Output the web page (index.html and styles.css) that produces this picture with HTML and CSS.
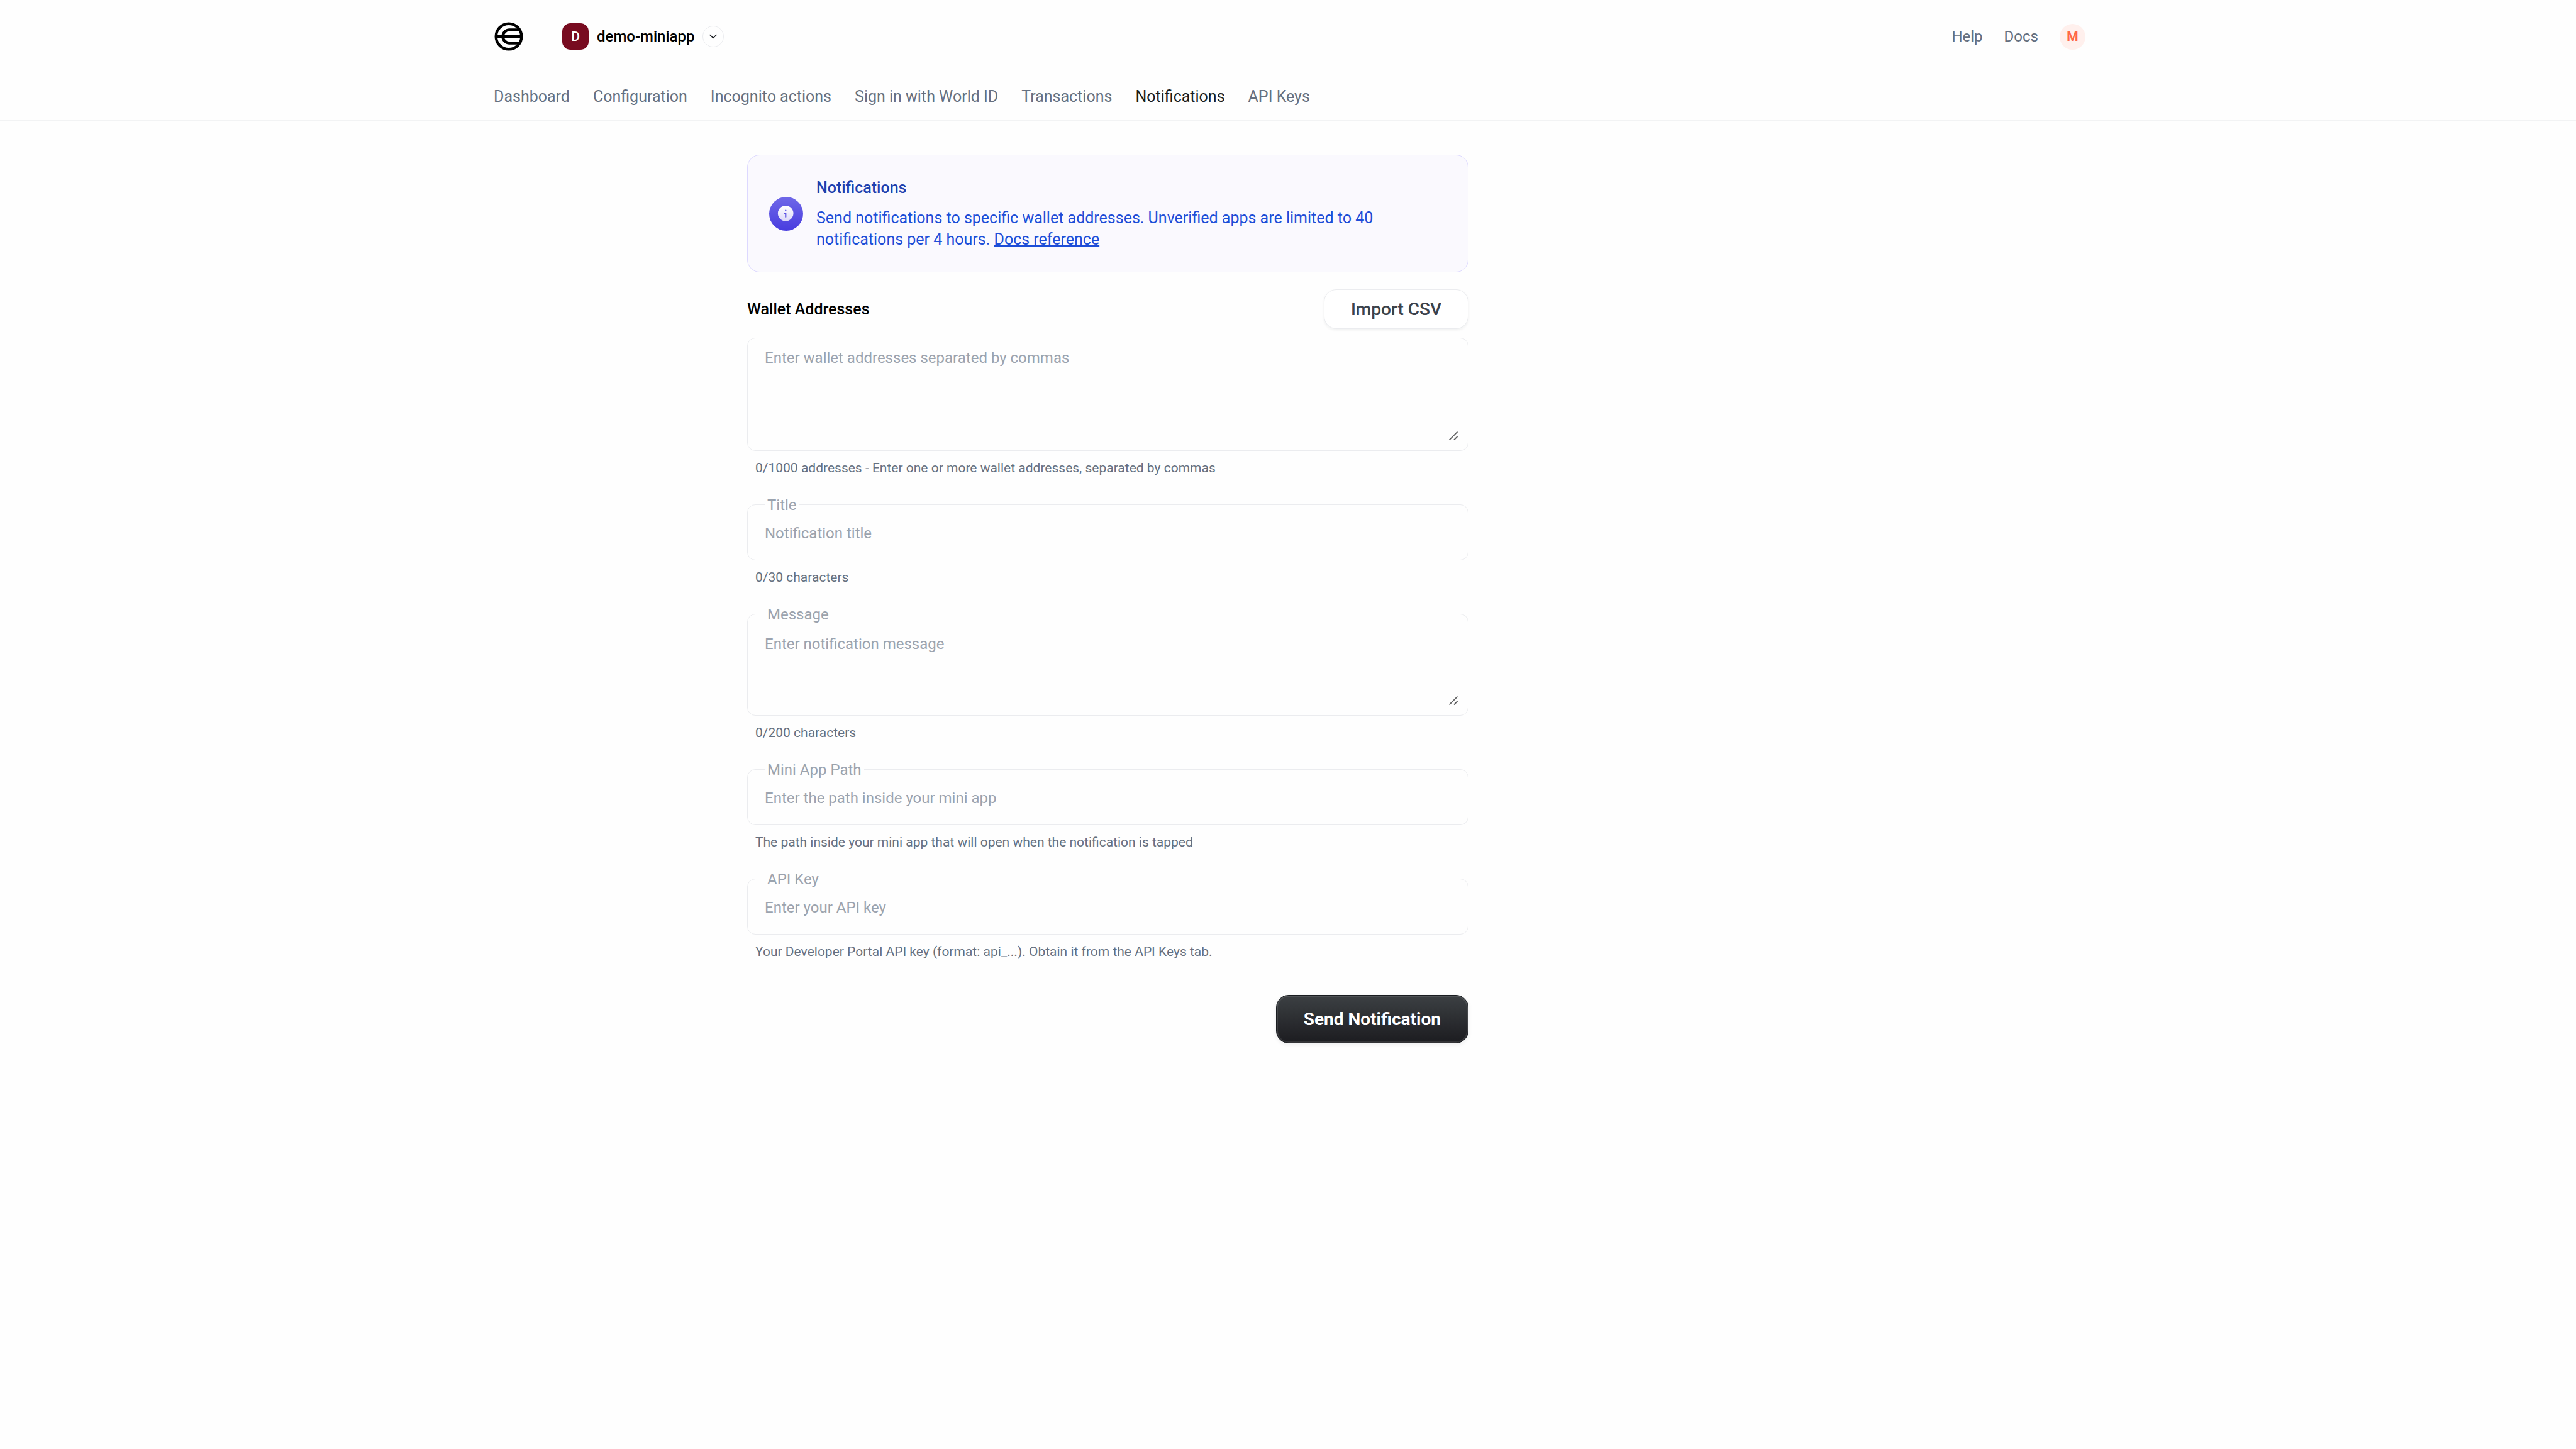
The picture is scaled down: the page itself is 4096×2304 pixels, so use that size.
FILE: index.html
```html
<!DOCTYPE html>
<html lang="en">
<head>
<meta charset="utf-8">
<meta name="viewport" content="width=device-width, initial-scale=1">
<title>Notifications</title>
<link rel="stylesheet" href="styles.css">
</head>
<body>
<header class="header">
  <div class="container topbar">
    <a class="logo" href="#" aria-label="Home">
      <svg viewBox="0 0 46 46" fill="none" stroke="#000" stroke-width="4.4">
        <circle cx="23" cy="23" r="20.3"/>
        <path d="M2.600 23H43.400M41 12.500H24a10.500 10.500 0 0 0 0 21H41"/>
      </svg>
    </a>
    <button class="app-switch" type="button">
      <span class="app-badge">D</span>
      <span>demo-miniapp</span>
      <span class="app-chevron">
        <svg viewBox="0 0 12 8" fill="none" stroke="#191c20" stroke-width="1.6" stroke-linecap="round" stroke-linejoin="round"><path d="M1 1.500l5 5 5-5"/></svg>
      </span>
    </button>
    <nav class="top-links">
      <a href="#">Help</a>
      <a href="#">Docs</a>
      <button class="avatar" type="button">M</button>
    </nav>
  </div>
  <nav class="container tabs">
    <a href="#">Dashboard</a>
    <a href="#">Configuration</a>
    <a href="#">Incognito actions</a>
    <a href="#">Sign in with World ID</a>
    <a href="#">Transactions</a>
    <a class="active" href="#" aria-current="page">Notifications</a>
    <a href="#">API Keys</a>
  </nav>
</header>

<main class="container page">
  <div class="content">
    <section class="notice">
      <svg class="notice-icon" viewBox="0 0 54 54">
        <defs>
          <linearGradient id="disc" x1="0" y1="0" x2="0" y2="1"><stop offset="0" stop-color="#6f68e8"/><stop offset="1" stop-color="#483cdf"/></linearGradient>
          <linearGradient id="info" x1="0" y1="0" x2="0" y2="1"><stop offset="0" stop-color="#fff"/><stop offset="1" stop-color="#dcd9f8"/></linearGradient>
        </defs>
        <circle cx="27" cy="27" r="27" fill="url(#disc)"/>
        <circle cx="26.200" cy="26.300" r="12.300" fill="url(#info)"/>
        <circle cx="26.200" cy="21.700" r="1.200" fill="#5e55e4"/>
        <path d="M25 26.300h1.300v5.700" fill="none" stroke="#5a50e3" stroke-width="2.100" stroke-linecap="round" stroke-linejoin="round"/>
      </svg>
      <div class="notice-text">
        <h2>Notifications</h2>
        <p>Send notifications to specific wallet addresses. Unverified apps are limited to 40 notifications per 4 hours. <a href="#">Docs reference</a></p>
      </div>
    </section>

    <form class="form">
      <div class="field">
        <div class="field-head">
          <label for="wallets">Wallet Addresses</label>
          <button class="btn-light" type="button">Import CSV</button>
        </div>
        <div class="control">
          <span class="notch"></span>
          <textarea class="tall" id="wallets" placeholder="Enter wallet addresses separated by commas"></textarea>
          <svg class="grip" viewBox="0 0 14 14" stroke="#5f6061" stroke-width="1.800"><path d="M.5 13.500l13-13M8 13.500l5.500-5.500"/></svg>
        </div>
        <p class="hint">0/1000 addresses - Enter one or more wallet addresses, separated by commas</p>
      </div>

      <div class="field">
        <div class="control">
          <label class="legend" for="title">Title</label>
          <input id="title" type="text" placeholder="Notification title">
        </div>
        <p class="hint">0/30 characters</p>
      </div>

      <div class="field">
        <div class="control">
          <label class="legend" for="message">Message</label>
          <textarea class="short" id="message" placeholder="Enter notification message"></textarea>
          <svg class="grip" viewBox="0 0 14 14" stroke="#5f6061" stroke-width="1.800"><path d="M.5 13.500l13-13M8 13.500l5.500-5.500"/></svg>
        </div>
        <p class="hint">0/200 characters</p>
      </div>

      <div class="field">
        <div class="control">
          <label class="legend" for="path">Mini App Path</label>
          <input id="path" type="text" placeholder="Enter the path inside your mini app">
        </div>
        <p class="hint">The path inside your mini app that will open when the notification is tapped</p>
      </div>

      <div class="field">
        <div class="control">
          <label class="legend" for="key">API Key</label>
          <input id="key" type="text" placeholder="Enter your API key">
        </div>
        <p class="hint">Your Developer Portal API key (format: api_...). Obtain it from the API Keys tab.</p>
      </div>

      <button class="btn-dark" type="submit">Send Notification</button>
    </form>
  </div>
</main>
</body>
</html>
```

FILE: styles.css
```css
* {
  box-sizing: border-box;
}

body {
  margin: 0;
  background: #fefefe;
  color: #000;
  font: 24px/34px Roboto, "Liberation Sans", sans-serif;
}

h2,
p {
  margin: 0;
}

button,
input,
textarea {
  font: inherit;
  color: inherit;
}

button {
  padding: 0;
  border: 0;
  background: none;
  cursor: pointer;
}

a {
  color: inherit;
  text-decoration: none;
}

.container {
  max-width: 2536px;
  margin: 0 auto;
}

/* Header */

.header {
  border-bottom: 1px solid #f2f3f4;
}

.topbar {
  display: flex;
  align-items: center;
  height: 116px;
  padding-left: 6px;
}

.logo,
.logo svg {
  display: block;
  width: 46px;
  height: 46px;
}

.app-switch {
  display: flex;
  align-items: center;
  gap: 13px;
  margin-left: 62px;
  font-weight: 500;
}

.app-badge {
  width: 42px;
  height: 42px;
  border-radius: 13px;
  background: #780b20;
  color: #fff;
  font-size: 21px;
  line-height: 42px;
}

.app-chevron {
  display: grid;
  place-items: center;
  width: 34px;
  height: 34px;
  border: 1px solid #ebecef;
  border-radius: 50%;
}

.app-chevron svg {
  width: 12px;
  height: 8px;
}

.top-links {
  display: flex;
  align-items: center;
  gap: 34px;
  margin-left: auto;
  color: #657080;
}

.avatar {
  width: 41px;
  height: 41px;
  border-radius: 50%;
  background: #fff0ed;
  color: #ff6848;
  font-size: 21px;
  font-weight: 700;
}

.tabs {
  display: flex;
  gap: 37px;
  height: 75px;
  padding: 21px 0 0 5px;
  color: #657080;
  font-size: 25px;
}

.tabs .active {
  color: #191c20;
}

/* Page */

.page {
  display: grid;
  grid-template-columns: minmax(0, 408fr) minmax(0, 1147fr) minmax(0, 981fr);
  padding: 54px 0;
}

.content {
  display: flex;
  flex-direction: column;
  grid-column: 2;
  gap: 27px;
}

.notice {
  display: flex;
  align-items: center;
  gap: 21px;
  padding: 35px 34px 34px;
  border: 1px solid #ddd9ff;
  border-radius: 20px;
  background: #faf9fe;
  color: #1d4ed8;
  font-size: 25px;
}

.notice-icon {
  flex: none;
  width: 54px;
  height: 54px;
}

.notice-text {
  display: grid;
  gap: 14px;
  padding-right: 60px;
}

.notice h2 {
  color: #1e40af;
  font-size: 25px;
  font-weight: 500;
}

.notice a {
  text-decoration: underline;
  text-decoration-thickness: 2px;
}

.form {
  display: flex;
  flex-direction: column;
  gap: 45px;
}

.field {
  display: flex;
  flex-direction: column;
  gap: 14px;
}

.field-head {
  display: flex;
  align-items: center;
  justify-content: space-between;
  font-size: 25px;
  font-weight: 500;
}

.btn-light {
  height: 63px;
  padding: 0 42px;
  border: 1px solid #ebecef;
  border-radius: 20px;
  background: #fff;
  box-shadow: 0 2px 4px rgba(25, 28, 32, 0.06);
  color: #3c424b;
  font-size: 28px;
  font-weight: 500;
}

.control {
  position: relative;
  border: 1px solid #ebecef;
  border-radius: 13px;
}

.control input,
.control textarea {
  display: block;
  width: 100%;
  border: 0;
  outline: 0;
  background: none;
}

.control input {
  height: 87px;
  padding: 3px 27px 0;
}

.control textarea {
  resize: none;
}

.tall {
  height: 178px;
  padding: 14px 27px;
}

.short {
  height: 160px;
  padding: 30px 27px;
}

::placeholder {
  color: #9ba3ae;
  opacity: 1;
}

.legend,
.notch {
  position: absolute;
  left: 27px;
  background: #fefefe;
}

.legend {
  top: -17px;
  padding: 0 4px;
  color: #9ba3ae;
}

.notch {
  top: -1px;
  width: 8px;
  height: 1px;
}

.grip {
  position: absolute;
  right: 16px;
  bottom: 16px;
  width: 14px;
  height: 14px;
}

.hint {
  padding: 0 13px;
  color: #657080;
  font-size: 21px;
  line-height: 26px;
}

.btn-dark {
  align-self: flex-end;
  height: 77px;
  margin-top: 11px;
  padding: 0 43px;
  border: 1px solid #191c20;
  border-radius: 20px;
  background: linear-gradient(#3c4043, #1c1c20);
  box-shadow: inset 0 0 0 2px rgba(255, 255, 255, 0.1), 0 2px 6px rgba(25, 28, 32, 0.08);
  color: #fff;
  font-size: 28px;
  font-weight: 700;
}
```
